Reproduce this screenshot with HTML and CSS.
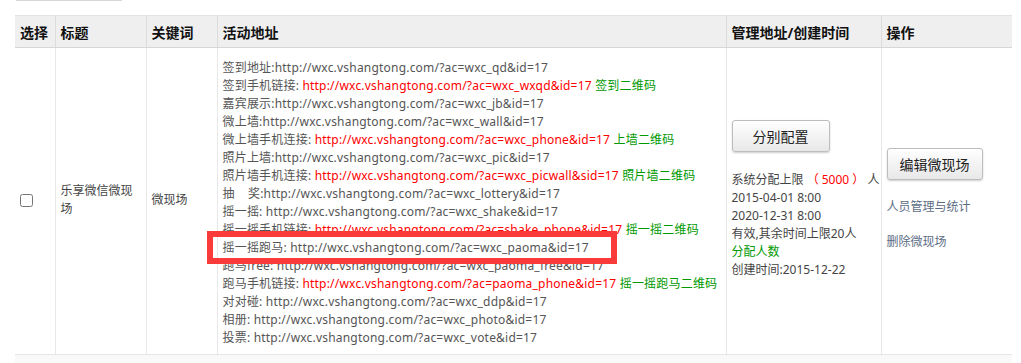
FILE: index.html
```html
<!DOCTYPE html>
<html lang="zh-CN">
<head>
  <meta charset="UTF-8" />
  <title>微现场列表</title>
  <link rel="stylesheet" href="styles.css">
</head>
<body>
  <div class="page">
    <div class="topbar"></div>

    <table class="list">
      <colgroup>
        <col style="width: 40px">
        <col style="width: 91px">
        <col style="width: 71px">
        <col style="width: 509px">
        <col style="width: 155px">
        <col style="width: 131px">
      </colgroup>
      <thead>
        <tr>
          <th>选择</th>
          <th>标题</th>
          <th>关键词</th>
          <th>活动地址</th>
          <th>管理地址/创建时间</th>
          <th>操作</th>
        </tr>
      </thead>
      <tbody>
        <tr>
          <td class="check"><input type="checkbox"></td>
          <td class="plain">乐享微信微现场</td>
          <td class="plain">微现场</td>
          <td class="links">
            <div class="addr">
              <div>签到地址:http://wxc.vshangtong.com/?ac=wxc_qd&amp;id=17</div>
              <div>签到手机链接: <span class="red">http://wxc.vshangtong.com/?ac=wxc_wxqd&amp;id=17</span> <span class="green">签到二维码</span></div>
              <div>嘉宾展示:http://wxc.vshangtong.com/?ac=wxc_jb&amp;id=17</div>
              <div>微上墙:http://wxc.vshangtong.com/?ac=wxc_wall&amp;id=17</div>
              <div>微上墙手机连接: <span class="red">http://wxc.vshangtong.com/?ac=wxc_phone&amp;id=17</span> <span class="green">上墙二维码</span></div>
              <div>照片上墙:http://wxc.vshangtong.com/?ac=wxc_pic&amp;id=17</div>
              <div>照片墙手机连接: <span class="red">http://wxc.vshangtong.com/?ac=wxc_picwall&amp;sid=17</span> <span class="green">照片墙二维码</span></div>
              <div>抽&nbsp;&nbsp;&nbsp;&nbsp;奖:http://wxc.vshangtong.com/?ac=wxc_lottery&amp;id=17</div>
              <div>摇一摇: http://wxc.vshangtong.com/?ac=wxc_shake&amp;id=17</div>
              <div>摇一摇手机链接: <span class="red">http://wxc.vshangtong.com/?ac=shake_phone&amp;id=17</span> <span class="green">摇一摇二维码</span></div>
              <div>摇一摇跑马: http://wxc.vshangtong.com/?ac=wxc_paoma&amp;id=17</div>
              <div>跑马free: http://wxc.vshangtong.com/?ac=wxc_paoma_free&amp;id=17</div>
              <div>跑马手机链接: <span class="red">http://wxc.vshangtong.com/?ac=paoma_phone&amp;id=17</span> <span class="green">摇一摇跑马二维码</span></div>
              <div>对对碰: http://wxc.vshangtong.com/?ac=wxc_ddp&amp;id=17</div>
              <div>相册: http://wxc.vshangtong.com/?ac=wxc_photo&amp;id=17</div>
              <div>投票: http://wxc.vshangtong.com/?ac=wxc_vote&amp;id=17</div>
              <span class="mark"></span>
            </div>
          </td>
          <td class="manage">
            <button class="btn">分别配置</button>
            <div class="info">
              <div>系统分配上限 <span class="red">（ 5000 ）</span> 人</div>
              <div>2015-04-01 8:00</div>
              <div>2020-12-31 8:00</div>
              <div>有效,其余时间上限20人</div>
              <div class="green">分配人数</div>
              <div>创建时间:2015-12-22</div>
            </div>
          </td>
          <td class="ops">
            <button class="btn">编辑微现场</button>
            <a href="#" class="op-link">人员管理与统计</a>
            <a href="#" class="op-link">删除微现场</a>
          </td>
        </tr>
        <tr class="next">
          <td colspan="6"></td>
        </tr>
      </tbody>
    </table>
  </div>
</body>
</html>
```

FILE: styles.css
```css
body {
  margin: 0;
  background: #fff;
  font-family: "Noto Sans", "Noto Sans CJK SC", sans-serif;
  font-size: 12px;
  color: #555;
}
.page {
  padding: 0 9px 0 15px;
}
.topbar {
  width: 106px;
  height: 1px;
  margin-left: 1px;
  background: #d6d6d6;
}
.list {
  margin-top: 14px;
  width: 997px;
  table-layout: fixed;
  border-collapse: collapse;
}
.list th {
  height: 31px;
  padding: 0 5px;
  background: #efefef;
  border-top: 1px solid #e2e2e2;
  border-bottom: 1px solid #d6d6d6;
  border-left: 1px solid #dcdcdc;
  text-align: left;
  font-size: 14px;
  font-weight: bold;
  color: #111;
  white-space: nowrap;
}
.list td {
  padding: 11px 5px 7px;
  line-height: 18px;
  vertical-align: middle;
  border-left: 1px solid #e8e8e8;
  border-bottom: 1px solid #e6e6e6;
  color: #444;
}
.list th:first-child,
.list td:first-child {
  border-left: none;
}
.list td.check,
.list td.plain {
  padding: 8px 5px 10px;
}
.check input {
  margin: 0;
  width: 13px;
  height: 13px;
  vertical-align: middle;
}
.links {
  letter-spacing: 0.2px;
  white-space: nowrap;
}
.addr {
  position: relative;
  color: #555;
}
.red {
  color: #f00;
}
.green {
  color: #090;
}
.mark {
  position: absolute;
  left: -16px;
  top: 172px;
  width: 410px;
  height: 33px;
  box-sizing: border-box;
  border: 6px solid #fb3a3a;
}
.btn {
  font-family: "Noto Sans CJK SC", sans-serif;
  font-size: 14px;
  color: #222;
  padding: 0;
  height: 32px;
  background: linear-gradient(#ffffff, #e8e8e8);
  border: 1px solid #bdbdbd;
  border-radius: 3px;
  box-shadow: 0 1px 2px rgba(0,0,0,0.2);
  cursor: pointer;
}
.list td.manage,
.list td.ops {
  padding: 7px 5px 11px;
}
.manage {
  white-space: nowrap;
}
.manage .btn {
  width: 98px;
  margin-bottom: 19px;
}
.manage .info {
  color: #444;
}
.ops .btn {
  width: 96px;
  margin-bottom: 18px;
}
.op-link {
  display: block;
  color: #5c6c84;
  text-decoration: none;
  margin-bottom: 17px;
}
.op-link:last-child {
  margin-bottom: 0;
}
.list tr.next td {
  height: 30px;
  padding: 0;
  background: #f9f9f9;
  border-bottom: none;
}
```
